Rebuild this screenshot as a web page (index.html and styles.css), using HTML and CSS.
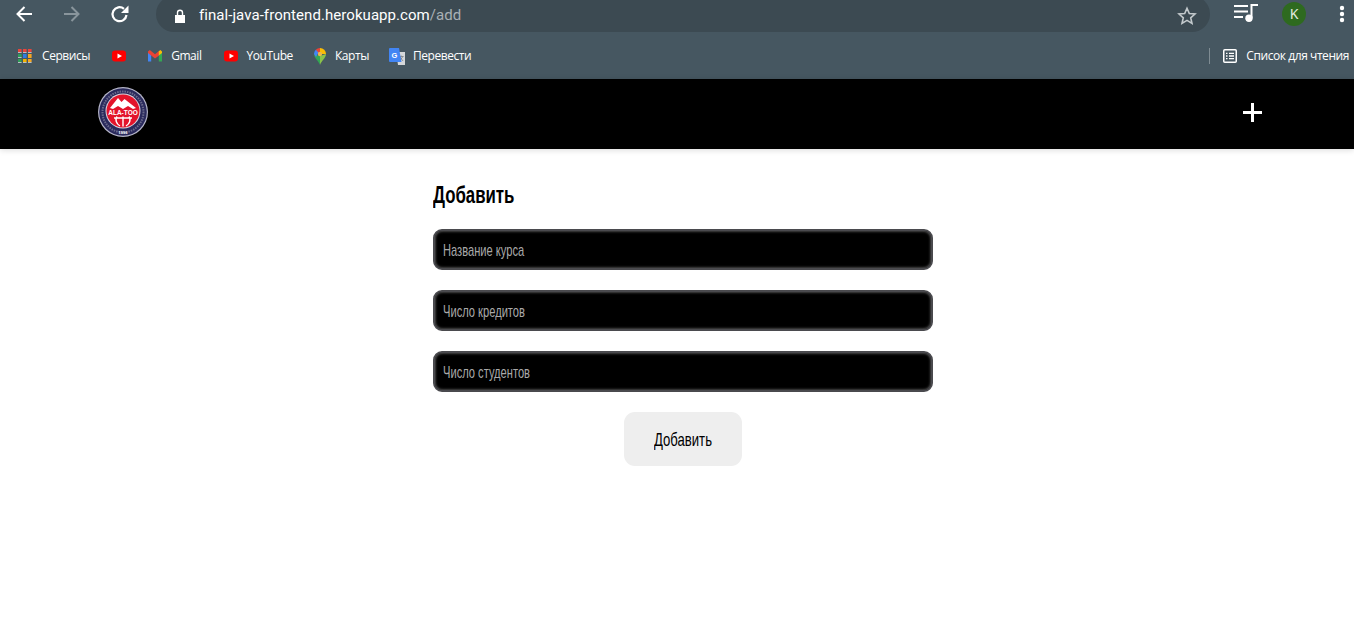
FILE: index.html
```html
<!DOCTYPE html>
<html lang="ru">
<head>
<meta charset="utf-8">
<title>Добавить</title>
<link rel="stylesheet" href="styles.css">
</head>
<body>
<div class="chrome">
  <div class="toolbar">
    <svg class="nav-icon back" viewBox="0 0 20 20"><path d="M18 10H4M10.500 3 3.500 10l7 7" fill="none" stroke="#fff" stroke-width="2"/></svg>
    <svg class="nav-icon forward" viewBox="0 0 20 20"><path d="M2 10h14M9.500 3l7 7-7 7" fill="none" stroke="#89959c" stroke-width="2"/></svg>
    <svg class="nav-icon reload" viewBox="0 0 20 20"><path d="M16.500 11A7 7 0 1 1 14 4.800" fill="none" stroke="#fff" stroke-width="2.200"/><path d="M11 9h7.500V1.500z" fill="#fff"/></svg>
    <div class="omnibox">
      <svg class="lock" viewBox="0 0 12 14"><path d="M1 6h10v8H1z" fill="#fff"/><path d="M3.500 6V3.800a2.500 2.500 0 0 1 5 0V6" fill="none" stroke="#fff" stroke-width="1.400"/></svg>
      <span class="url">final-java-frontend.herokuapp.com<span class="url-path">/add</span></span>
      <svg class="star" viewBox="0 0 20 20"><path d="M10 2.200l2.300 5.300 5.700.5-4.300 3.800 1.300 5.600L10 14.400l-5 3 1.300-5.600L2 8l5.700-.5z" fill="none" stroke="#c3c9cc" stroke-width="1.600"/></svg>
    </div>
    <svg class="media" viewBox="0 0 24 18"><path d="M0 2h14M0 7.500h14M0 13h9" stroke="#fff" stroke-width="2" fill="none"/><path d="M17.500 14V1h6.500" stroke="#fff" stroke-width="2" fill="none"/><circle cx="15" cy="14.300" r="3.700" fill="#fff"/></svg>
    <div class="avatar">K</div>
    <svg class="kebab" viewBox="0 0 6 18"><circle cx="3" cy="3" r="2.200" fill="#fff"/><circle cx="3" cy="9" r="2.200" fill="#fff"/><circle cx="3" cy="15" r="2.200" fill="#fff"/></svg>
  </div>
  <div class="bookmarks">
    <div class="bm bm-services">
      <svg class="bm-icon" viewBox="0 0 14 14">
        <rect x="0" y="0" width="3.600" height="3" fill="#e8453c"/><rect x="5" y="0" width="3.600" height="3" fill="#e8453c"/><rect x="10" y="0" width="3.600" height="3" fill="#e8453c"/>
        <rect x="0" y="3" width="3.600" height="1" fill="#b9c0c4"/><rect x="5" y="3" width="3.600" height="1" fill="#b9c0c4"/><rect x="10" y="3" width="3.600" height="1" fill="#b9c0c4"/>
        <rect x="0" y="5" width="3.600" height="3" fill="#2f9e58"/><rect x="5" y="5" width="3.600" height="3" fill="#2f7de1"/><rect x="10" y="5" width="3.600" height="3" fill="#f5a623"/>
        <rect x="0" y="8" width="3.600" height="1" fill="#b9c0c4"/><rect x="5" y="8" width="3.600" height="1" fill="#2f7de1"/><rect x="10" y="8" width="3.600" height="1" fill="#f5a623"/>
        <rect x="0" y="10" width="3.600" height="3" fill="#2f9e58"/><rect x="5" y="10" width="3.600" height="3" fill="#f5b400"/><rect x="10" y="10" width="3.600" height="3" fill="#f5a623"/>
        <rect x="0" y="13" width="3.600" height="1" fill="#b9c0c4"/><rect x="5" y="13" width="3.600" height="1" fill="#b9c0c4"/><rect x="10" y="13" width="3.600" height="1" fill="#b9c0c4"/>
      </svg>
      <span>Сервисы</span>
    </div>
    <div class="bm bm-yt-solo">
      <svg class="bm-icon" viewBox="0 0 14 14"><rect y="1.500" width="14" height="11" rx="3" fill="#f00"/><path d="M5.500 4.500v5L10 7z" fill="#fff"/></svg>
    </div>
    <div class="bm bm-gmail">
      <svg class="bm-icon" viewBox="0 0 14 14"><path d="M0 3v9.500h3.200V5.500z" fill="#4285f4"/><path d="M14 3v9.500h-3.200V5.500z" fill="#34a853"/><path d="M0 2.500 1.800 1 7 5.200 11 2v4.500L7 9.500 0 4z" fill="#ea4335"/><path d="M10.800 2.300 12.300 1 14 2.500V4l-3.200 2.500z" fill="#fbbc04"/></svg>
      <span>Gmail</span>
    </div>
    <div class="bm bm-youtube">
      <svg class="bm-icon" viewBox="0 0 14 14"><rect y="1.500" width="14" height="11" rx="3" fill="#f00"/><path d="M5.500 4.500v5L10 7z" fill="#fff"/></svg>
      <span>YouTube</span>
    </div>
    <div class="bm bm-maps">
      <svg class="bm-icon bm-icon-pin" viewBox="0 0 12 17"><path d="M6 17C4.800 13 0 10 0 6l6 2z" fill="#34a853"/><path d="M6 17c1.200-4 6-7 6-11L6 8z" fill="#8bc34a"/><path d="M1.800 1.800A6 6 0 0 1 6 0l1 4-3 2z" fill="#ea4335"/><path d="M6 0a6 6 0 0 1 6 6L8 6 6 4z" fill="#fbbc04"/><path d="M0 6a6 6 0 0 1 1.800-4.200L4.500 4.500 2 9z" fill="#4285f4"/><circle cx="6" cy="6" r="2.200" fill="#e9b949"/></svg>
      <span>Карты</span>
    </div>
    <div class="bm bm-translate">
      <svg class="bm-icon bm-icon-wide" viewBox="0 0 16 17"><path d="M7 4h9v13H9z" fill="#d6d8da"/><path d="M10 8.500h4.500M12.200 7.500v1M10.800 13l3-4.500M11 9l3 4" stroke="#7b8084" stroke-width=".8" fill="none"/><path d="M1 0h9l2.500 14H1a1 1 0 0 1-1-1V1a1 1 0 0 1 1-1z" fill="#4285f4"/><text class="g-letter" x="2.500" y="9.500">G</text></svg>
      <span>Перевести</span>
    </div>
    <div class="bm-spacer"></div>
    <div class="bm-divider"></div>
    <div class="bm bm-reading">
      <svg class="bm-icon" viewBox="0 0 14 14"><rect x=".75" y=".75" width="12.500" height="12.500" rx="1" fill="none" stroke="#fff" stroke-width="1.500"/><path d="M3 4.300h1.500M3 7h1.500M3 9.700h1.500M6 4.300h5M6 7h5M6 9.700h5" stroke="#fff" stroke-width="1.300"/></svg>
      <span>Список для чтения</span>
    </div>
  </div>
</div>

<nav class="navbar">
  <svg class="logo" viewBox="0 0 50 50">
    <circle cx="25" cy="25" r="25" fill="#b5b5c8"/>
    <circle cx="25" cy="25" r="23.800" fill="#2a2a5c"/>
    <circle cx="25" cy="25" r="20.500" fill="none" stroke="#6a6a8c" stroke-width="2" stroke-dasharray="1.500 1"/>
    <circle cx="25" cy="24" r="17.500" fill="#d9d9e2"/>
    <circle cx="25" cy="24" r="16.500" fill="#e3142b"/>
    <path d="M12 21 20 11l3.500 4 3-3L38 21l-3 1-5-3-5 3-5-3-5 3z" fill="#fff"/>
    <path d="M16 31h18M25 29.500v10M19 29.500c-2 3-1 7 3 9.500M31 29.500c2 3 1 7-3 9.500" stroke="#fff" stroke-width="1.400" fill="none"/>
    <text class="logo-name" x="25" y="27.500">ALA-TOO</text>
    <text class="logo-year" x="25" y="47">1996</text>
  </svg>
  <div class="plus"></div>
</nav>

<main class="content">
  <form class="course-form">
    <h1 class="form-title"><span class="condensed title-text">Добавить</span></h1>
    <div class="field"><span class="condensed placeholder">Название курса</span></div>
    <div class="field"><span class="condensed placeholder">Число кредитов</span></div>
    <div class="field"><span class="condensed placeholder">Число студентов</span></div>
    <div class="actions"><button class="submit" type="button"><span class="condensed submit-text">Добавить</span></button></div>
  </form>
</main>
</body>
</html>
```

FILE: styles.css
```css
* { box-sizing: border-box; }
html, body { margin: 0; padding: 0; }
body {
  width: 1354px;
  height: 620px;
  overflow: hidden;
  background: #fff;
  font-family: "Liberation Sans", sans-serif;
}
.chrome { background: #465761; height: 79px; }
.toolbar {
  height: 40px;
  display: flex;
  align-items: flex-start;
  padding-left: 14px;
  overflow: hidden;
}
.nav-icon { width: 20px; height: 20px; margin-top: 4px; flex: none; }
.forward { margin-left: 28px; }
.reload { margin-left: 28px; }
.omnibox {
  margin-left: 26px;
  margin-top: -4px;
  width: 1054px;
  height: 36px;
  background: #3c4a52;
  border-radius: 18px;
  display: flex;
  align-items: center;
  padding: 4px 13px 0 18px;
  flex: none;
}
.lock { width: 12px; height: 14px; flex: none; }
.url {
  margin: -2px 0 0 13px;
  color: #fff;
  font-family: Roboto, sans-serif;
  font-size: 15px;
  letter-spacing: 0.06px;
  white-space: nowrap;
  flex: 1;
}
.url-path { color: #a8b0b5; }
.star { width: 20px; height: 20px; flex: none; }
.media { width: 24px; height: 18px; margin: 4px 0 0 24px; flex: none; }
.avatar {
  width: 24px; height: 24px; margin: 2px 0 0 24px; flex: none;
  border-radius: 50%;
  background: #2e6a1f;
  color: #e4ece0;
  font-family: "Noto Sans", sans-serif;
  font-size: 14px;
  line-height: 24px;
  text-align: center;
}
.kebab { width: 6px; height: 18px; margin: 5px 0 0 33px; flex: none; }

.bookmarks {
  height: 39px;
  display: flex;
  align-items: center;
  padding: 0 5px 7px 18px;
  color: #fff;
  font-family: "Open Sans", sans-serif;
  font-size: 12px;
  letter-spacing: -0.43px;
}
.bm { display: flex; align-items: center; gap: 9px; white-space: nowrap; flex: none; }
.bm span { position: relative; top: -1px; }
.bm-services span { margin-left: 1px; }
.bm-icon { width: 14px; height: 14px; flex: none; }
.bm-icon-pin { width: 12px; height: 17px; }
.bm-icon-wide { width: 16px; height: 17px; margin-right: -1px; }
.g-letter { font-family: "Liberation Sans", sans-serif; font-size: 7.500px; font-weight: 700; fill: #fff; letter-spacing: 0; }
.bm-yt-solo { margin-left: 22px; }
.bm-gmail { margin-left: 22px; }
.bm-youtube { margin-left: 22px; }
.bm-maps { margin-left: 21px; }
.bm-translate { margin-left: 20px; }
.bm-spacer { flex: 1; }
.bm-divider { width: 1px; height: 16px; background: #7f8c93; margin-right: 13px; }

.navbar {
  height: 70px;
  background: #000;
  display: flex;
  align-items: center;
  justify-content: space-between;
  padding: 0 91px 4px 98px;
  box-shadow: 0 1px 6px rgba(0,0,0,.15);
  position: relative;
}
.logo { width: 50px; height: 50px; }
.logo-name { font-family: "Liberation Sans", sans-serif; font-size: 6.500px; font-weight: 700; fill: #fff; text-anchor: middle; }
.logo-year { font-family: "Liberation Sans", sans-serif; font-size: 4px; font-weight: 700; fill: #fff; text-anchor: middle; }
.plus {
  width: 19px; height: 19px;
  margin-right: 1px;
  background:
    linear-gradient(#fff, #fff) center / 19px 3px no-repeat,
    linear-gradient(#fff, #fff) center / 3px 19px no-repeat;
}

.content { display: flex; justify-content: center; padding-left: 12px; }
.course-form { width: 500px; padding-top: 31px; }
.condensed {
  display: inline-block;
  font-family: "Liberation Sans", sans-serif;
  transform-origin: left center;
  white-space: nowrap;
}
.form-title {
  margin: 0 0 19px;
  font-size: 24px;
  line-height: 30px;
  font-weight: 700;
  color: #000;
}
.title-text { transform: scaleX(0.70); }
.field {
  height: 41px;
  margin-bottom: 20px;
  background: #000;
  border: 2px solid #4a4a4e;
  border-radius: 9px;
  box-shadow: inset 0 0 3px #888;
  padding: 2px 0 0 8px;
  display: flex;
  align-items: center;
}
.placeholder { color: #a9a9a9; font-size: 17px; transform: scaleX(0.655); }
.actions { display: flex; justify-content: center; }
.submit {
  width: 118px;
  height: 54px;
  border: 0;
  border-radius: 11px;
  background: #eee;
  color: #000;
  font-size: 19px;
  padding: 2px 0 0;
}
.submit-text { transform: scaleX(0.69); transform-origin: center; }
```
